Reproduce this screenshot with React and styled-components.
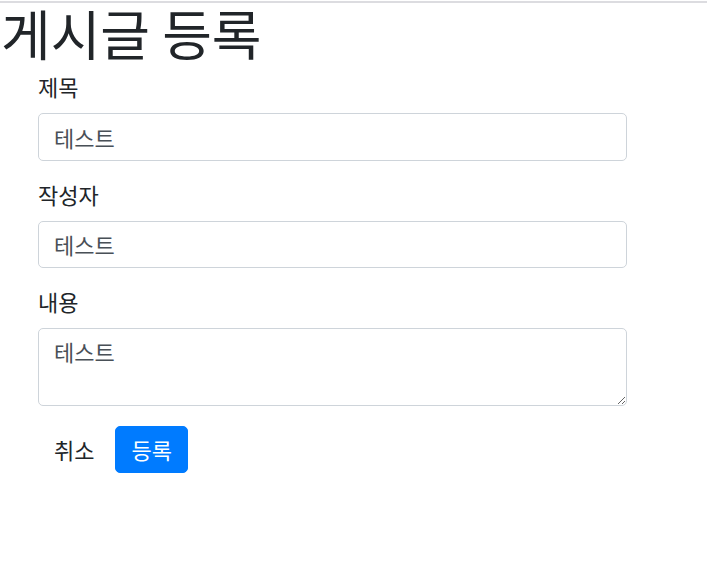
import React, { useState } from "react";
import styled, { createGlobalStyle } from "styled-components";

const GlobalStyle = createGlobalStyle`
	* {
		box-sizing: border-box;
	}
	body {
		margin: 0;
		background: #fff;
		color: #212529;
		font-family: "Noto Sans CJK KR", "Noto Sans", sans-serif;
		font-size: 22px;
		line-height: 1.5;
	}
`;

const TopRule = styled.div`
	margin-top: 1px;
	height: 2px;
	background: #dcdce0;
`;

const Title = styled.h1`
	margin: 0 0 10px;
	padding-left: 1px;
	font-size: 54px;
	font-weight: 400;
	line-height: 60px;
	white-space: nowrap;
	color: #212529;
`;

const Form = styled.form`
	width: 589px;
	margin-left: 38px;
`;

const Group = styled.div`
	margin-bottom: 20px;
`;

const Label = styled.label`
	display: block;
	margin-bottom: 10px;
	padding-bottom: 3px;
	font-size: 22px;
	line-height: 27px;
`;

const Field = styled.input`
	display: block;
	width: 100%;
	height: 47.5px;
	padding: 7px 15px;
	font: inherit;
	font-size: 22px;
	line-height: 30px;
	color: #495057;
	background: #fff;
	border: 1px solid #ced4da;
	border-radius: 5px;
	outline: none;
`;

const Area = styled.textarea`
	display: block;
	width: 100%;
	height: 77.5px;
	padding: 7px 15px;
	font: inherit;
	font-size: 22px;
	line-height: 30px;
	color: #495057;
	background: #fff;
	border: 1px solid #ced4da;
	border-radius: 5px;
	outline: none;
`;

const Actions = styled.div`
	display: flex;
	align-items: center;
	gap: 5px;
`;

const Button = styled.button`
	height: 47.5px;
	padding: 0 15px;
	font: inherit;
	font-size: 22px;
	line-height: 30px;
	border: 1px solid ${(p) => (p.$primary ? "#007bff" : "transparent")};
	border-radius: 5px;
	background: ${(p) => (p.$primary ? "#007bff" : "transparent")};
	color: ${(p) => (p.$primary ? "#fff" : "#212529")};
	cursor: pointer;
`;

const App = () => {
	const [post, setPost] = useState({
		title: "테스트",
		writer: "테스트",
		content: "테스트",
	});

	const onChange = (e) => setPost({ ...post, [e.target.name]: e.target.value });

	return (
		<>
			<GlobalStyle />
			<TopRule />
			<Title>게시글 등록</Title>
			<Form onSubmit={(e) => e.preventDefault()}>
				<Group>
					<Label>제목</Label>
					<Field name="title" value={post.title} onChange={onChange} />
				</Group>
				<Group>
					<Label>작성자</Label>
					<Field name="writer" value={post.writer} onChange={onChange} />
				</Group>
				<Group>
					<Label>내용</Label>
					<Area name="content" value={post.content} onChange={onChange} />
				</Group>
				<Actions>
					<Button type="button">취소</Button>
					<Button type="submit" $primary>
						등록
					</Button>
				</Actions>
			</Form>
		</>
	);
};

export default App;
